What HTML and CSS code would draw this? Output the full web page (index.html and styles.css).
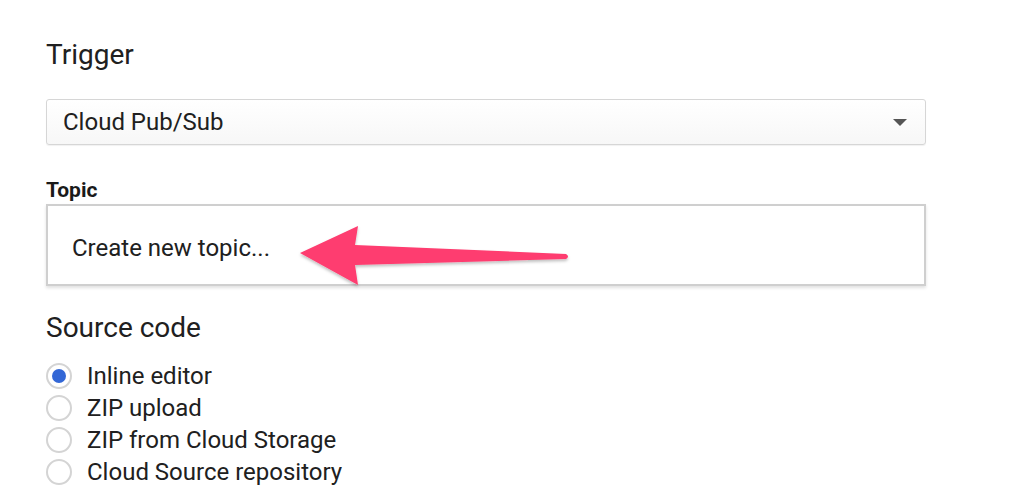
FILE: index.html
```html
<!DOCTYPE html>
<html>
<head>
<meta charset="utf-8">
<link rel="stylesheet" href="styles.css">
</head>
<body>
<div class="page">
  <h2 class="section-title trigger-title">Trigger</h2>
  <div class="select">
    <span class="select-value">Cloud Pub/Sub</span>
    <span class="caret"></span>
  </div>
  <div class="field-label">Topic</div>
  <div class="topic-wrap">
    <div class="topic-box">
      <span class="topic-option">Create new topic...</span>
    </div>
    <svg class="pointer" width="300" height="70" viewBox="0 0 300 70">
      <defs>
        <filter id="sh" x="-10%" y="-20%" width="120%" height="140%">
          <feDropShadow dx="0" dy="2" stdDeviation="1.5" flood-color="#000" flood-opacity="0.25"/>
        </filter>
      </defs>
      <path filter="url(#sh)" fill="#fe3c6f" d="M4 30 L62 3 L59 22 L270 31 Q274 33.5 270 36 L59 42 L62 62 Z"/>
    </svg>
  </div>
  <h2 class="section-title source-title">Source code</h2>
  <ul class="radios">
    <li class="radio-row"><span class="radio checked"></span><span class="radio-label">Inline editor</span></li>
    <li class="radio-row"><span class="radio"></span><span class="radio-label">ZIP upload</span></li>
    <li class="radio-row"><span class="radio"></span><span class="radio-label">ZIP from Cloud Storage</span></li>
    <li class="radio-row"><span class="radio"></span><span class="radio-label">Cloud Source repository</span></li>
  </ul>
</div>
</body>
</html>
```

FILE: styles.css
```css
html, body {
  margin: 0;
  padding: 0;
  background: #fff;
}
body {
  font-family: Roboto, "Liberation Sans", sans-serif;
  color: #212121;
}
.page {
  padding: 39px 0 0 46px;
  width: 880px;
}
.section-title {
  margin: 0;
  font-weight: 400;
  font-size: 28px;
  line-height: 32px;
  color: #202020;
}
.select {
  margin-top: 28px;
  height: 46px;
  box-sizing: border-box;
  border: 1px solid #d6d6d6;
  border-radius: 3px;
  background: linear-gradient(#ffffff, #f7f7f7);
  display: flex;
  align-items: center;
  padding: 0 16px;
  justify-content: space-between;
  box-shadow: 0 1px 1px rgba(0,0,0,0.06);
}
.select-value {
  font-size: 24px;
  color: #202020;
}
.caret {
  width: 0;
  height: 0;
  border-left: 7px solid transparent;
  border-right: 7px solid transparent;
  border-top: 7px solid #555;
  margin-right: 2px;
}
.field-label {
  margin-top: 33px;
  font-size: 21px;
  font-weight: 700;
  line-height: 24px;
  color: #1a1a1a;
}
.topic-wrap {
  position: relative;
  margin-top: 2px;
}
.topic-box {
  height: 82px;
  box-sizing: border-box;
  border: 2px solid #cfcfcf;
  box-shadow: 0 2px 3px rgba(0,0,0,0.12);
  background: #fff;
  display: flex;
  align-items: center;
  padding: 5px 24px 0;
}
.topic-option {
  font-size: 24px;
  color: #202020;
}
.pointer {
  position: absolute;
  left: 250px;
  top: 19px;
}
.source-title {
  margin-top: 26px;
}
.radios {
  list-style: none;
  margin: 16px 0 0;
  padding: 0;
}
.radio-row {
  display: flex;
  align-items: center;
  height: 32px;
}
.radio {
  width: 26px;
  height: 26px;
  box-sizing: border-box;
  border: 2px solid #d4d4d4;
  border-radius: 50%;
  display: flex;
  align-items: center;
  justify-content: center;
  margin-right: 15px;
  background: #fff;
}
.radio.checked::after {
  content: "";
  width: 14px;
  height: 14px;
  border-radius: 50%;
  background: #3367d6;
}
.radio-label {
  font-size: 24px;
  color: #202020;
}
```
